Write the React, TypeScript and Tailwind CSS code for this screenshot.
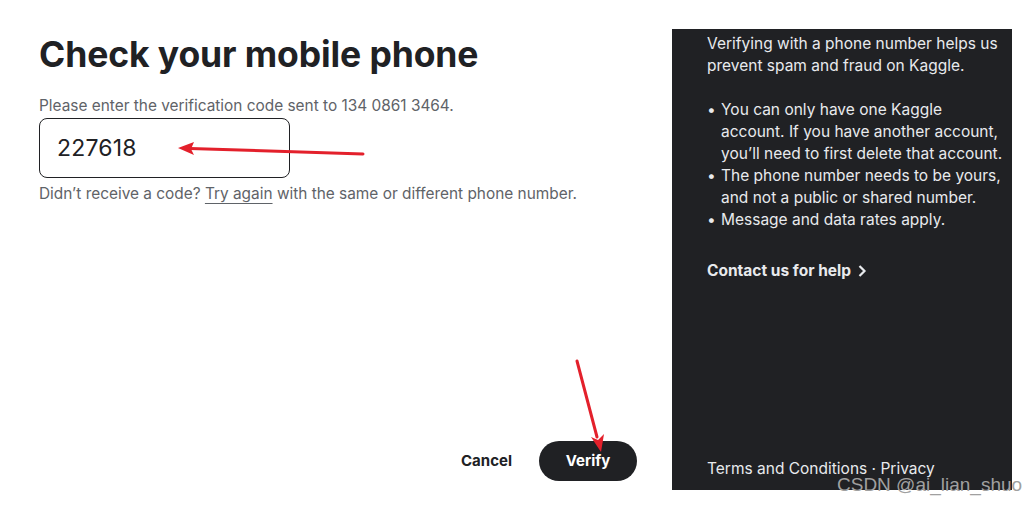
import React from "react";

const font = { fontFamily: "Inter, 'Noto Sans', sans-serif" };

export default function App() {
  return (
    <div
      className="relative w-[1024px] h-[505px] bg-white overflow-hidden flex pt-[29px]"
      style={font}
    >
      {/* Left form */}
      <div className="w-[672px] flex flex-col pl-[39px] pr-[35px] pb-[24px] -mt-[29px]">
        <h1 className="mt-[35px] text-[35.5px] leading-[40px] font-bold text-[#202124] tracking-[-0.1px]">
          Check your mobile phone
        </h1>
        <p className="mt-[21px] text-[15.4px] leading-[20px] text-[#5f6368]">
          Please enter the verification code sent to 134 0861 3464.
        </p>
        <div className="mt-[2px] w-[251px] h-[60px] border border-[#202124] rounded-[8px] flex items-center pl-[17px]">
          <span className="text-[23px] text-[#202124] tracking-[0.2px]">227618</span>
        </div>
        <p className="mt-[6px] text-[15.4px] leading-[20px] text-[#5f6368]">
          Didn’t receive a code?{" "}
          <span className="underline underline-offset-[4px] decoration-[#5f6368]">Try again</span>{" "}
          with the same or different phone number.
        </p>
        <div className="flex-1" />
        <div className="flex items-center justify-end gap-[27px]">
          <span className="text-[15px] font-bold text-[#202124]">Cancel</span>
          <div className="w-[98px] h-[40px] rounded-full bg-[#202124] flex items-center justify-center">
            <span className="text-[15px] font-bold text-white">Verify</span>
          </div>
        </div>
      </div>

      {/* Dark panel */}
      <div className="w-[340px] h-[461px] bg-[#202124] flex flex-col pl-[35px] pt-[4px] pb-[10px] text-[15.5px] leading-[22px] text-[#e8eaed]">
        <p>
          Verifying with a phone number helps us
          <br />
          prevent spam and fraud on Kaggle.
        </p>
        <ul className="mt-[22px]">
          <li className="flex">
            <span className="w-[14px] shrink-0">•</span>
            <span>
              You can only have one Kaggle
              <br />
              account. If you have another account,
              <br />
              you’ll need to first delete that account.
            </span>
          </li>
          <li className="flex">
            <span className="w-[14px] shrink-0">•</span>
            <span>
              The phone number needs to be yours,
              <br />
              and not a public or shared number.
            </span>
          </li>
          <li className="flex">
            <span className="w-[14px] shrink-0">•</span>
            <span>Message and data rates apply.</span>
          </li>
        </ul>
        <div className="mt-[29px] flex items-center gap-[6px] font-bold">
          <span>Contact us for help</span>
          <svg width="10" height="14" viewBox="0 0 10 14" fill="none">
            <path d="M2.5 2 L7.5 7 L2.5 12" stroke="#e8eaed" strokeWidth="2.2" />
          </svg>
        </div>
        <div className="flex-1" />
        <p>Terms and Conditions · Privacy</p>
      </div>

      {/* Annotation arrows */}
      <svg className="absolute left-0 top-0 pointer-events-none" width="1024" height="505">
        <line x1="363" y1="154" x2="190" y2="148.5" stroke="#e3202b" strokeWidth="3" strokeLinecap="round" />
        <polygon points="178,148 194,142 191,149 194,155" fill="#e3202b" />
        <line x1="577" y1="361" x2="597" y2="437" stroke="#e3202b" strokeWidth="3" strokeLinecap="round" />
        <polygon points="601,452 591,437 598,440 604,434" fill="#e3202b" />
      </svg>

      {/* Watermark */}
      <span
        className="absolute left-[837px] top-[474px] text-[19px] leading-[22px] text-[#a0a0a0] pointer-events-none"
        style={{ fontFamily: "'Liberation Sans', Arial, sans-serif" }}
      >
        CSDN @ai_lian_shuo
      </span>
    </div>
  );
}
